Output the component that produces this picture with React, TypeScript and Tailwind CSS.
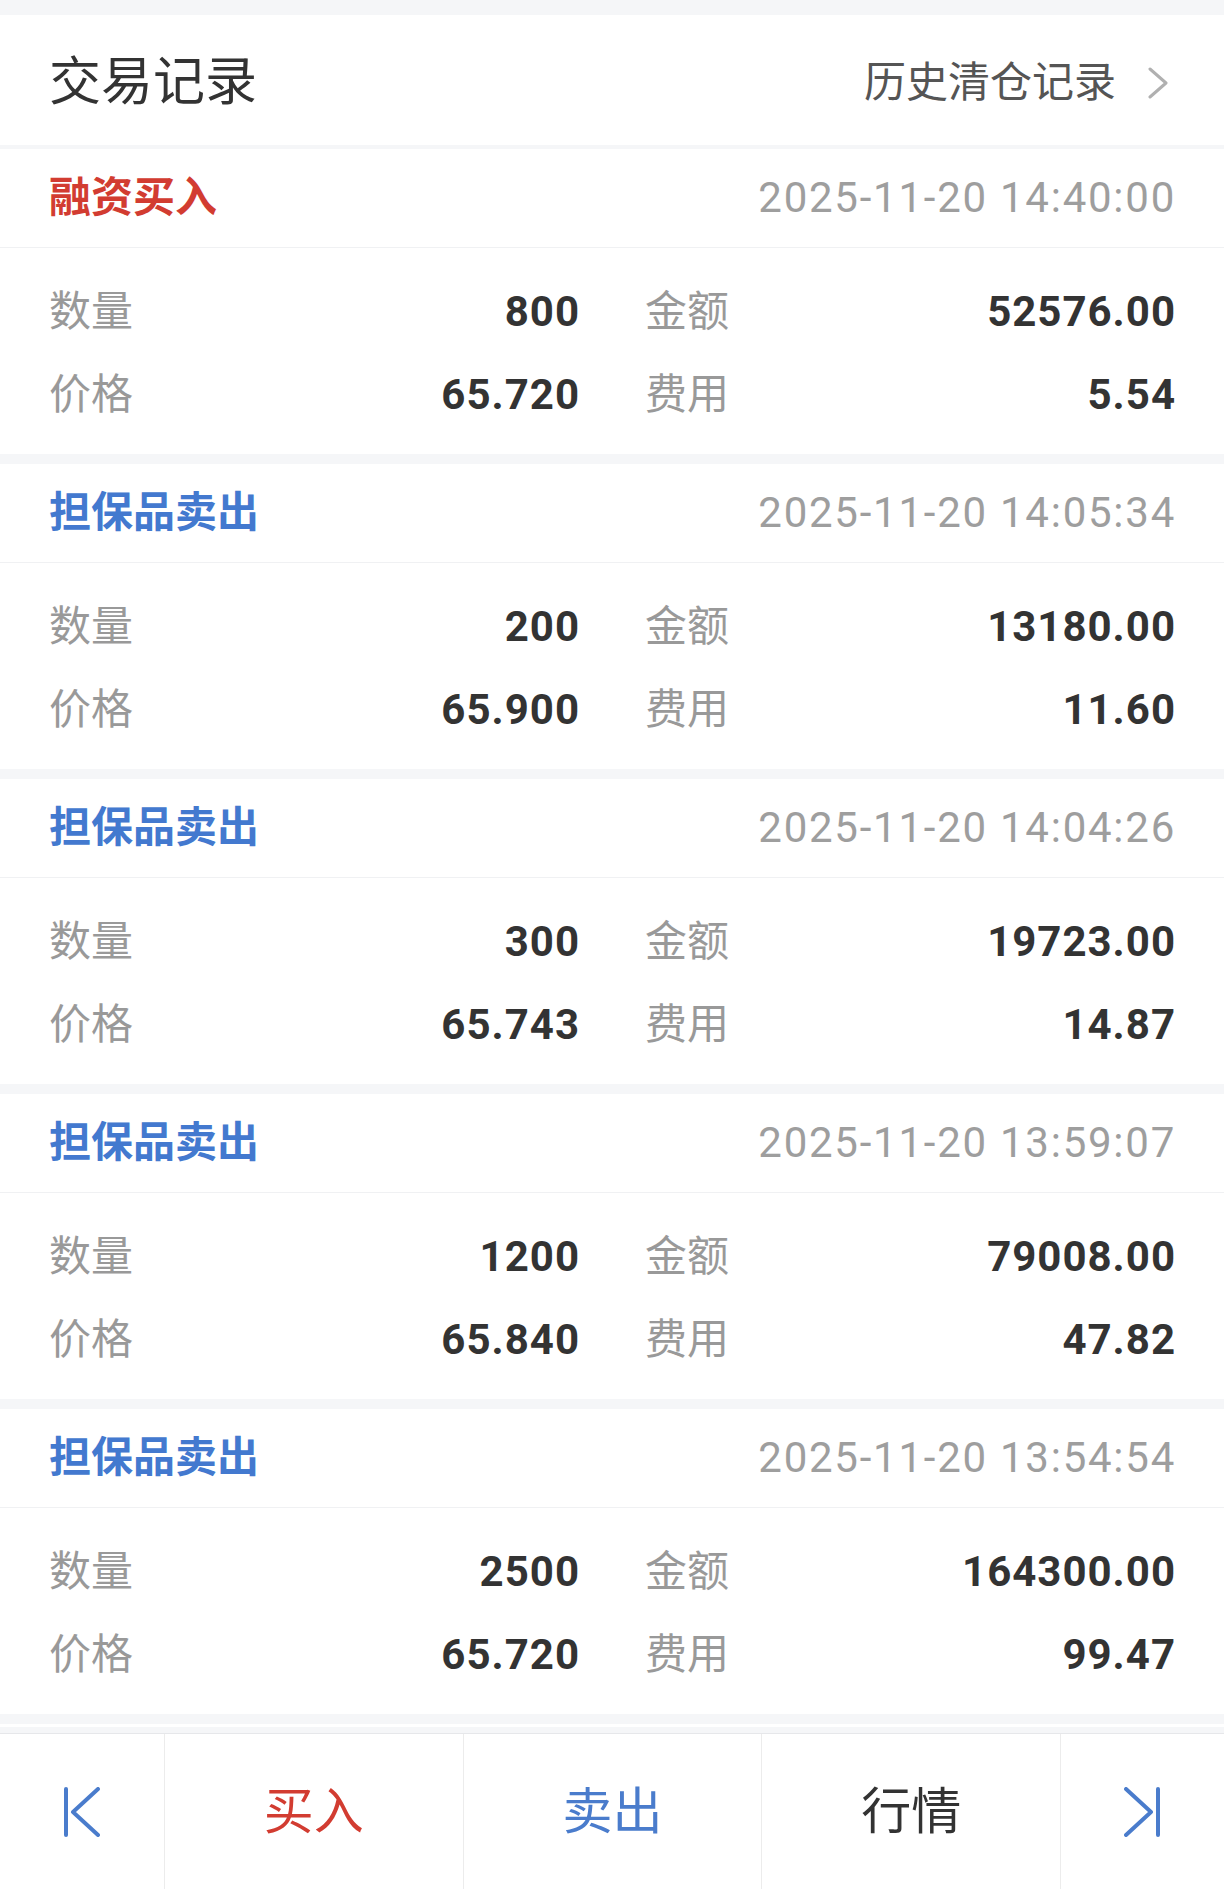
import type { ReactNode } from "react";

type Trade = {
  kind: "buy" | "sell";
  title: string;
  time: string;
  qty: string;
  amount: string;
  price: string;
  fee: string;
};

const trades: Trade[] = [
  { kind: "buy", title: "融资买入", time: "2025-11-20 14:40:00", qty: "800", amount: "52576.00", price: "65.720", fee: "5.54" },
  { kind: "sell", title: "担保品卖出", time: "2025-11-20 14:05:34", qty: "200", amount: "13180.00", price: "65.900", fee: "11.60" },
  { kind: "sell", title: "担保品卖出", time: "2025-11-20 14:04:26", qty: "300", amount: "19723.00", price: "65.743", fee: "14.87" },
  { kind: "sell", title: "担保品卖出", time: "2025-11-20 13:59:07", qty: "1200", amount: "79008.00", price: "65.840", fee: "47.82" },
  { kind: "sell", title: "担保品卖出", time: "2025-11-20 13:54:54", qty: "2500", amount: "164300.00", price: "65.720", fee: "99.47" },
];

function Field({ label, value }: { label: string; value: string }) {
  return (
    <div className="flex h-[83px] items-center justify-between">
      <span className="text-[42px] leading-none text-[#999999]">{label}</span>
      <span className="text-[42px] font-bold leading-none tracking-[1px] text-[#333333]">{value}</span>
    </div>
  );
}

function TradeCard({ trade }: { trade: Trade }) {
  return (
    <div className="h-[305px] bg-white">
      {/* Header */}
      <div className="flex h-[99px] items-center justify-between border-b border-[#f0f1f3] pl-[49px] pr-[48px]">
        <span
          className={
            trade.kind === "buy"
              ? "text-[42px] font-bold leading-none text-[#d23c31]"
              : "text-[42px] font-bold leading-none text-[#4379cf]"
          }
        >
          {trade.title}
        </span>
        <span className="text-[42px] leading-none tracking-[1.75px] text-[#9e9e9e]">{trade.time}</span>
      </div>

      {/* Body */}
      <div className="grid grid-cols-2 gap-x-[65px] pb-[18px] pl-[49px] pr-[48px] pt-[22px]">
        <Field label="数量" value={trade.qty} />
        <Field label="金额" value={trade.amount} />
        <Field label="价格" value={trade.price} />
        <Field label="费用" value={trade.fee} />
      </div>
    </div>
  );
}

function FirstIcon() {
  return (
    <svg width="36" height="50" viewBox="0 0 36 50" fill="none" stroke="#4a7ccc" strokeWidth="4" strokeLinecap="round" strokeLinejoin="round">
      <line x1="2" y1="2" x2="2" y2="48" />
      <polyline points="34,2 9,25 34,48" />
    </svg>
  );
}

function LastIcon() {
  return (
    <svg width="36" height="50" viewBox="0 0 36 50" fill="none" stroke="#4a7ccc" strokeWidth="4" strokeLinecap="round" strokeLinejoin="round">
      <line x1="34" y1="2" x2="34" y2="48" />
      <polyline points="2,2 27,25 2,48" />
    </svg>
  );
}

function BarCell({ children, first }: { children: ReactNode; first?: boolean }) {
  return (
    <div className={first ? "flex items-center justify-center" : "flex items-center justify-center border-l border-[#ececec]"}>
      {children}
    </div>
  );
}

export default function App() {
  return (
    <div
      className="flex min-h-[1889px] w-full flex-col bg-[#f5f6f8]"
      style={{ fontFamily: "Roboto, 'Noto Sans CJK SC', 'Noto Sans', sans-serif" }}
    >
      {/* Page header */}
      <div className="mt-[15px] flex h-[130px] items-center justify-between bg-white pl-[49px] pr-[56px] pt-[5px]">
        <span className="text-[52px] leading-none text-[#333333]">交易记录</span>
        <div className="flex items-center">
          <span className="text-[42px] leading-none text-[#555555]">历史清仓记录</span>
          <svg className="ml-[32px]" width="20" height="32" viewBox="0 0 20 32" fill="none" stroke="#b0b0b0" strokeWidth="3" strokeLinecap="round" strokeLinejoin="round">
            <polyline points="2,2 18,16 2,30" />
          </svg>
        </div>
      </div>

      {/* Trade list */}
      <div className="mt-[4px] flex flex-col gap-[10px]">
        {trades.map((t, i) => (
          <TradeCard key={i} trade={t} />
        ))}
      </div>

      {/* peek of next card under the toolbar */}
      <div className="mt-[10px] h-[3px] bg-white" />
      <div className="h-[6px] bg-[#f5f6f8]" />

      {/* Bottom toolbar */}
      <div className="grid h-[156px] grid-cols-[164px_1fr_1fr_1fr_164px] border-t border-[#e6e7ea] bg-white">
        <BarCell first>
          <FirstIcon />
        </BarCell>
        <BarCell>
          <span className="text-[50px] leading-none text-[#d23c31]">买入</span>
        </BarCell>
        <BarCell>
          <span className="text-[50px] leading-none text-[#4a7ccc]">卖出</span>
        </BarCell>
        <BarCell>
          <span className="text-[50px] leading-none text-[#333333]">行情</span>
        </BarCell>
        <BarCell>
          <LastIcon />
        </BarCell>
      </div>
    </div>
  );
}
